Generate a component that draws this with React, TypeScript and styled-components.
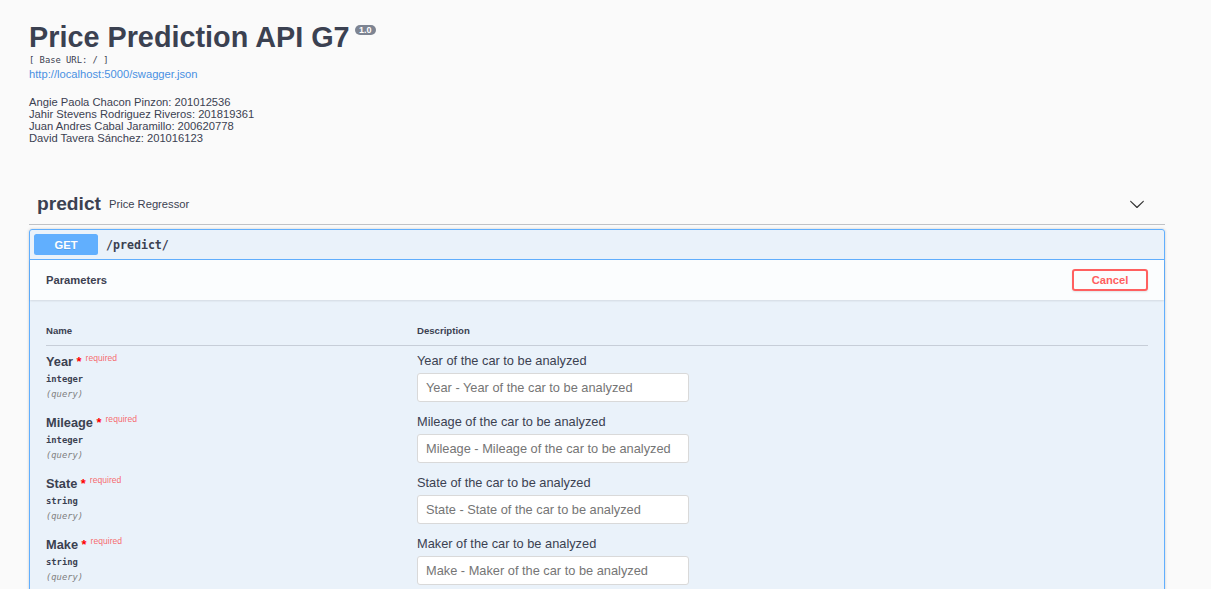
import styled, { createGlobalStyle } from "styled-components";

const authors = [
  "Angie Paola Chacon Pinzon: 201012536",
  "Jahir Stevens Rodriguez Riveros: 201819361",
  "Juan Andres Cabal Jaramillo: 200620778",
  "David Tavera Sánchez: 201016123",
];

const params = [
  { name: "Year", type: "integer", desc: "Year of the car to be analyzed" },
  { name: "Mileage", type: "integer", desc: "Mileage of the car to be analyzed" },
  { name: "State", type: "string", desc: "State of the car to be analyzed" },
  { name: "Make", type: "string", desc: "Maker of the car to be analyzed" },
];

const GlobalStyle = createGlobalStyle`
  body {
    margin: 0;
    background: #fafafa;
    font-family: "Liberation Sans", Arial, sans-serif;
    color: #3b4151;
  }
`;

export default function App() {
  return (
    <>
      <GlobalStyle />
      <Wrapper>
        <Info>
          <Title>
            Price Prediction API G7
            <Version>1.0</Version>
          </Title>
          <BaseUrl>[ Base URL: / ]</BaseUrl>
          <SpecLink href="#">http://localhost:5000/swagger.json</SpecLink>
          <Description>
            {authors.map((a) => (
              <div key={a}>{a}</div>
            ))}
          </Description>
        </Info>

        <TagSection>
          <TagHeader>
            <TagName>predict</TagName>
            <TagDesc>Price Regressor</TagDesc>
            <ArrowButton aria-label="collapse">
              <svg width="16" height="16" viewBox="0 0 20 20">
                <path
                  fill="#333"
                  d="M17.418 6.109c.272-.268.709-.268.979 0s.271.701 0 .969l-7.908 7.83c-.27.268-.707.268-.979 0l-7.908-7.830c-.27-.268-.27-.701 0-.969.271-.268.709-.268.979 0L10 13.25l7.418-7.141z"
                />
              </svg>
            </ArrowButton>
          </TagHeader>

          <Opblock>
            <Summary>
              <Method>GET</Method>
              <Path>/predict/</Path>
            </Summary>
            <SectionHeader>
              <SectionTitle>Parameters</SectionTitle>
              <CancelButton>Cancel</CancelButton>
            </SectionHeader>
            <TableWrap>
              <HeadRow>
                <HeadCell>Name</HeadCell>
                <HeadCell>Description</HeadCell>
              </HeadRow>
              {params.map((p) => (
                <ParamRow key={p.name}>
                  <div>
                    <ParamName>
                      {p.name}
                      <Star>&nbsp;*</Star>
                      <RequiredTag>required</RequiredTag>
                    </ParamName>
                    <ParamType>{p.type}</ParamType>
                    <ParamIn>(query)</ParamIn>
                  </div>
                  <div>
                    <DescText>{p.desc}</DescText>
                    <ParamInput placeholder={`${p.name} - ${p.desc}`} />
                  </div>
                </ParamRow>
              ))}
            </TableWrap>
          </Opblock>
        </TagSection>
      </Wrapper>
    </>
  );
}

const Wrapper = styled.div`
  width: 1136px;
  padding: 21px 0 0 29px;
`;

const Info = styled.div`
  display: flex;
  flex-direction: column;
  align-items: flex-start;
`;

const Title = styled.h2`
  margin: 0;
  font-size: 28.8px;
  line-height: 33px;
  font-weight: 700;
  color: #3b4151;
`;

const Version = styled.span`
  display: inline-block;
  vertical-align: top;
  margin: 4px 0 0 5px;
  padding: 0 4.5px;
  height: 10px;
  line-height: 10px;
  border-radius: 10px;
  background: #7d8492;
  color: #fff;
  font-size: 9px;
  font-weight: 700;
`;

const BaseUrl = styled.pre`
  margin: 0;
  font-family: "DejaVu Sans Mono", monospace;
  font-size: 8.8px;
  line-height: 13px;
  color: #3b4151;
`;

const SpecLink = styled.a`
  font-size: 11.2px;
  line-height: 14px;
  color: #4990e2;
  text-decoration: none;
`;

const Description = styled.div`
  margin-top: 15px;
  font-size: 11.2px;
  line-height: 12px;
  color: #3b4151;
`;

const TagSection = styled.div`
  margin-top: 40px;
`;

const TagHeader = styled.div`
  display: flex;
  align-items: center;
  height: 40px;
  padding: 0 20px 0 8px;
  border-bottom: 1px solid rgba(59, 65, 81, 0.3);
`;

const TagName = styled.h3`
  margin: 0;
  font-size: 19.2px;
  line-height: 22px;
  font-weight: 700;
  color: #3b4151;
`;

const TagDesc = styled.small`
  flex: 1;
  padding: 0 8px;
  font-size: 11.2px;
  color: #3b4151;
`;

const ArrowButton = styled.button`
  display: flex;
  padding: 0;
  border: none;
  background: none;
`;

const Opblock = styled.div`
  margin-top: 4px;
  border: 1px solid #61affe;
  border-radius: 3px;
  background: rgba(97, 175, 254, 0.1);
  box-shadow: 0 0 3px rgba(0, 0, 0, 0.19);
`;

const Summary = styled.div`
  display: flex;
  align-items: center;
  padding: 4px;
  border-bottom: 1px solid #61affe;
`;

const Method = styled.span`
  display: flex;
  align-items: center;
  justify-content: center;
  min-width: 64px;
  height: 21px;
  border-radius: 2.5px;
  background: #61affe;
  color: #fff;
  font-size: 11.2px;
  font-weight: 700;
  text-shadow: 0 1px 0 rgba(0, 0, 0, 0.1);
`;

const Path = styled.span`
  padding: 0 8px;
  font-family: "DejaVu Sans Mono", monospace;
  font-size: 11.6px;
  font-weight: 600;
  color: #3b4151;
`;

const SectionHeader = styled.div`
  display: flex;
  align-items: center;
  justify-content: space-between;
  height: 40px;
  padding: 0 16px;
  background: rgba(255, 255, 255, 0.8);
  box-shadow: 0 1px 2px rgba(0, 0, 0, 0.1);
`;

const SectionTitle = styled.h4`
  margin: 0;
  font-size: 11.2px;
  font-weight: 700;
  color: #3b4151;
`;

const CancelButton = styled.button`
  width: 76px;
  height: 22px;
  padding: 0;
  border: 2px solid #ff6060;
  border-radius: 3px;
  background: transparent;
  color: #ff6060;
  font-family: "Liberation Sans", Arial, sans-serif;
  font-size: 11.2px;
  font-weight: 700;
  box-shadow: 0 1px 2px rgba(0, 0, 0, 0.1);
`;

const TableWrap = styled.div`
  padding: 16px;
`;

const HeadRow = styled.div`
  display: grid;
  grid-template-columns: 371px 1fr;
  align-items: center;
  height: 29px;
  border-bottom: 1px solid rgba(59, 65, 81, 0.2);
`;

const HeadCell = styled.div`
  font-size: 9.6px;
  font-weight: 700;
  color: #3b4151;
`;

const ParamRow = styled.div`
  display: grid;
  grid-template-columns: 371px 1fr;
  box-sizing: border-box;
  height: 61px;
  padding-top: 8.4px;
`;

const ParamName = styled.div`
  font-size: 12.8px;
  line-height: 14.7px;
  font-weight: 700;
  color: #3b4151;
`;

const Star = styled.span`
  color: red;
`;

const RequiredTag = styled.span`
  padding: 0 4px;
  font-size: 8.6px;
  line-height: 1;
  font-weight: 400;
  vertical-align: 5px;
  color: rgba(255, 0, 0, 0.6);
`;

const ParamType = styled.div`
  padding: 4px 0;
  font-family: "DejaVu Sans Mono", monospace;
  font-size: 8.8px;
  line-height: 11.2px;
  font-weight: 600;
  color: #3b4151;
`;

const ParamIn = styled.div`
  font-family: "DejaVu Sans Mono", monospace;
  font-size: 8.8px;
  line-height: 11.2px;
  font-style: italic;
  color: gray;
`;

const DescText = styled.p`
  margin: 0;
  font-size: 12.8px;
  line-height: 14.7px;
  color: #3b4151;
`;

const ParamInput = styled.input`
  display: block;
  box-sizing: border-box;
  width: 272px;
  height: 29px;
  margin-top: 3.6px;
  padding: 0 8px;
  border: 1px solid #d9d9d9;
  border-radius: 3px;
  background: #fff;
  font-family: "Liberation Sans", Arial, sans-serif;
  font-size: 12.8px;
  color: #3b4151;

  &::placeholder {
    color: #757575;
  }
`;
